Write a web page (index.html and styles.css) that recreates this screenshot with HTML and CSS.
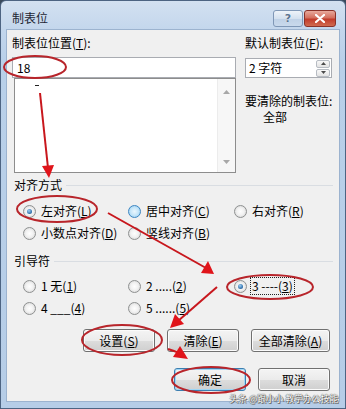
FILE: index.html
```html
<!DOCTYPE html>
<html lang="zh">
<head>
<meta charset="utf-8">
<title>制表位</title>
<link rel="stylesheet" href="styles.css">
</head>
<body>
<div class="window">
  <div class="titlebar">
    <span class="title">制表位</span>
    <div class="caption-btns">
      <span class="cap help">?</span>
      <span class="cap close"><svg width="10" height="9" viewBox="0 0 10 9"><path d="M1 1 L9 8 M9 1 L1 8" stroke="#fff" stroke-width="2.2" stroke-linecap="round"/></svg></span>
    </div>
  </div>
  <div class="client">
    <div class="top">
      <div class="left-col">
        <div class="label">制表位位置(<u>T</u>):</div>
        <div class="input">18</div>
        <div class="listbox">
          <div class="list-area"><span class="dash"></span></div>
          <div class="scroll">
            <svg width="7" height="4" viewBox="0 0 7 4"><path d="M0 4 L3.5 0 L7 4 Z" fill="#a8a8a8"/></svg>
            <svg width="7" height="4" viewBox="0 0 7 4"><path d="M0 0 L3.5 4 L7 0 Z" fill="#a8a8a8"/></svg>
          </div>
        </div>
      </div>
      <div class="right-col">
        <div class="label">默认制表位(<u>F</u>):</div>
        <div class="spinner">
          <span class="spin-text">2 字符</span>
          <div class="spin-btns">
            <span class="spin-btn"><svg width="5" height="3" viewBox="0 0 5 3"><path d="M0 3 L2.5 0 L5 3 Z" fill="#4a4a4a"/></svg></span>
            <span class="spin-btn"><svg width="5" height="3" viewBox="0 0 5 3"><path d="M0 0 L2.5 3 L5 0 Z" fill="#4a4a4a"/></svg></span>
          </div>
        </div>
        <div class="label clear-label">要清除的制表位:</div>
        <div class="clear-val">全部</div>
      </div>
    </div>

    <div class="group-head first"><span>对齐方式</span><span class="line"></span></div>
    <div class="radio-grid">
      <div class="opt"><span class="radio on"></span><span>左对齐(<u>L</u>)</span></div>
      <div class="opt"><span class="radio hot"></span><span>居中对齐(<u>C</u>)</span></div>
      <div class="opt"><span class="radio"></span><span>右对齐(<u>R</u>)</span></div>
      <div class="opt"><span class="radio"></span><span>小数点对齐(<u>D</u>)</span></div>
      <div class="opt"><span class="radio"></span><span>竖线对齐(<u>B</u>)</span></div>
    </div>

    <div class="group-head second"><span>引导符</span><span class="line"></span></div>
    <div class="radio-grid leaders">
      <div class="opt"><span class="radio"></span><span>1 无(<u>1</u>)</span></div>
      <div class="opt"><span class="radio"></span><span>2 .....(<u>2</u>)</span></div>
      <div class="opt"><span class="radio on"></span><span class="focus">3 ----(<u>3</u>)</span></div>
      <div class="opt"><span class="radio"></span><span>4 ___(<u>4</u>)</span></div>
      <div class="opt"><span class="radio"></span><span>5 ......(<u>5</u>)</span></div>
    </div>

    <div class="btn-row row1">
      <span class="btn">设置(<u>S</u>)</span>
      <span class="btn">清除(<u>E</u>)</span>
      <span class="btn wide">全部清除(<u>A</u>)</span>
    </div>
    <div class="btn-row row2">
      <span class="btn default">确定</span>
      <span class="btn">取消</span>
    </div>
  </div>

  <svg class="annot" width="346" height="409" viewBox="0 0 346 409">
    <g fill="none" stroke="#b8252b" stroke-width="2">
      <ellipse cx="35" cy="67" rx="31" ry="11"/>
      <ellipse cx="57" cy="209" rx="40" ry="13"/>
      <ellipse cx="270" cy="287" rx="43" ry="12"/>
      <ellipse cx="122" cy="340" rx="40" ry="15"/>
      <ellipse cx="211" cy="380" rx="39" ry="13"/>
    </g>
    <g stroke="#c8171d" stroke-width="2" fill="none">
      <line x1="40" y1="93" x2="48" y2="168"/>
      <line x1="108" y1="213" x2="206" y2="268"/>
      <line x1="217" y1="287" x2="178" y2="321"/>
      <line x1="168" y1="349" x2="177" y2="352"/>
    </g>
    <g fill="#e0141a">
      <polygon points="49,178 54,165 42,166"/>
      <polygon points="214,274 201,273 208,261"/>
      <polygon points="170,328 184,324 175,314"/>
      <polygon points="188,359 173,357 180,346"/>
    </g>
  </svg>
  <div class="watermark">头条 @跟小小 教学办公技能</div>
</div>
</body>
</html>
```
FILE: styles.css
```css
html, body {
  margin: 0;
  padding: 0;
}
body {
  width: 346px;
  height: 409px;
  overflow: hidden;
  background: #3a4a5c;
  font-family: "Noto Sans CJK SC", "Liberation Sans", sans-serif;
  font-size: 12px;
  color: #000;
}
u { text-decoration: underline; text-underline-offset: 1px; }

.window {
  position: relative;
  width: 346px;
  height: 409px;
  box-sizing: border-box;
  border: 1px solid #4d6482;
  border-radius: 6px 6px 0 0;
  padding: 0 6px 7px;
  background: linear-gradient(#d3e1f1, #c3d6ec 29px, #b9d0e9 60px, #b6cde7);
  display: flex;
  flex-direction: column;
}

.titlebar {
  height: 29px;
  display: flex;
  justify-content: space-between;
  align-items: flex-start;
}
.title {
  margin: 10px 0 0 5px;
  line-height: 14px;
  font-size: 12px;
  color: #1c2633;
}
.caption-btns {
  display: flex;
  margin: 9px 3px 0 0;
  gap: 1px;
}
.cap {
  height: 17px;
  box-sizing: border-box;
  border-radius: 3px;
  display: flex;
  align-items: center;
  justify-content: center;
}
.help {
  width: 30px;
  border: 1px solid #7f97b6;
  background: linear-gradient(#eef3f9, #d4e1ef 50%, #bfd1e6 51%, #c9d9ec);
  color: #5a7390;
  font-family: "DejaVu Sans", sans-serif;
  font-weight: bold;
  font-size: 11px;
  text-shadow: 0 0 1px #fff;
}
.close {
  width: 32px;
  border: 1px solid #8a3128;
  background: linear-gradient(#e8a99c, #d4705f 45%, #c23c2b 55%, #d06a4f);
}

.client {
  flex: 1;
  background: #f0f0f0;
  box-shadow: 0 0 0 1px #9cb3cf;
  padding: 6px 0 10px;
  display: flex;
  flex-direction: column;
}

.label {
  line-height: 14px;
  white-space: nowrap;
}

.top {
  display: grid;
  grid-template-columns: 224px 87px;
  column-gap: 9px;
  padding-left: 5px;
}
.input {
  margin-top: 7px;
  height: 21px;
  box-sizing: border-box;
  border: 1px solid #a9acb2;
  background: #fff;
  padding-left: 4px;
  line-height: 19px;
}
.listbox {
  margin-left: 2px;
  height: 95px;
  box-sizing: border-box;
  border: 1px solid #8d8d8d;
  background: #fff;
  display: flex;
}
.list-area {
  flex: 1;
  padding: 6px 0 0 20px;
}
.dash {
  display: block;
  width: 4px;
  height: 1px;
  background: #222;
}
.scroll {
  width: 17px;
  background: #f7f7f7;
  border-left: 1px solid #ececec;
  display: flex;
  flex-direction: column;
  justify-content: space-between;
  align-items: center;
  padding: 11px 0 8px;
}

.spinner {
  margin-top: 8px;
  height: 20px;
  box-sizing: border-box;
  border: 1px solid #a9acb2;
  background: #fff;
  display: flex;
  align-items: center;
  justify-content: space-between;
}
.spin-text {
  padding-left: 3px;
  line-height: 18px;
}
.spin-btns {
  display: flex;
  flex-direction: column;
  gap: 1px;
  margin-right: 1px;
}
.spin-btn {
  width: 14px;
  height: 8px;
  box-sizing: border-box;
  border: 1px solid #b7bcc3;
  border-radius: 2px;
  background: linear-gradient(#f8f8f8, #e3e3e3);
  display: flex;
  align-items: center;
  justify-content: center;
}
.clear-label { margin-top: 16px; }
.clear-val {
  margin-top: 2px;
  padding-left: 18px;
  line-height: 14px;
}

.group-head {
  display: flex;
  align-items: center;
  padding: 0 6px 0 7px;
  line-height: 14px;
}
.group-head.first { margin-top: 5px; }
.group-head.second { margin-top: 10px; }
.group-head .line {
  flex: 1;
  height: 1px;
  background: #d9dde2;
  margin-left: 4px;
}

.radio-grid {
  display: grid;
  grid-template-columns: 105px 106px 1fr;
  grid-auto-rows: 22px;
  padding-left: 16px;
  margin-top: 8px;
}
.radio-grid.leaders { margin-top: 7px; }
.opt {
  display: flex;
  align-items: center;
  gap: 5px;
  white-space: nowrap;
  line-height: 14px;
}
.radio {
  width: 13px;
  height: 13px;
  flex: none;
  box-sizing: border-box;
  border-radius: 50%;
  border: 1px solid #8e9090;
  background: radial-gradient(circle at 50% 50%, #fefefe 0, #f2f2f2 45%, #cfcfcf 100%);
  display: flex;
  align-items: center;
  justify-content: center;
}
.radio.on::after {
  content: "";
  width: 5px;
  height: 5px;
  border-radius: 50%;
  background: radial-gradient(circle at 40% 35%, #9fd0f5, #2a6aa6 70%, #18497a);
}
.radio.hot {
  border-color: #3d86c2;
  background: radial-gradient(circle at 50% 50%, #eaf6fd 0, #c6e6f9 50%, #8cc7ee 100%);
}
.focus {
  outline: 1px dotted #222;
  outline-offset: 1px;
}

.btn-row {
  display: flex;
  justify-content: flex-end;
  gap: 12px;
  padding-right: 9px;
}
.btn-row.row1 { margin-top: 10px; }
.btn-row.row2 { margin-top: 16px; }
.btn {
  width: 72px;
  height: 23px;
  box-sizing: border-box;
  border: 1px solid #707070;
  border-radius: 3px;
  background: linear-gradient(#f4f4f4, #ebebeb 50%, #dddddd 51%, #cfcfcf);
  box-shadow: inset 0 0 0 1px #fbfbfb;
  display: flex;
  align-items: center;
  justify-content: center;
  line-height: 14px;
}
.btn.wide { width: 79px; }
.btn.default {
  border-color: #3c7fb1;
  box-shadow: inset 0 0 0 1px #9fd6f5;
}

.annot {
  position: absolute;
  left: -1px;
  top: -1px;
  pointer-events: none;
}
.watermark {
  position: absolute;
  right: 7px;
  bottom: 4px;
  font-size: 9px;
  line-height: 11px;
  color: #ffffff;
  letter-spacing: -0.2px;
  text-shadow: 0 0 1px #4a4a4a, 0 0 1px #4a4a4a, 1px 1px 0 #6a6a6a;
}
```
